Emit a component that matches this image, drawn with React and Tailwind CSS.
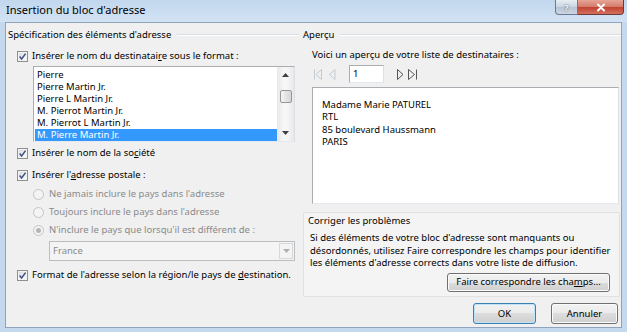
import React from 'react';

const u = (s) => <span className="underline underline-offset-1">{s}</span>;

const Check = () => (
  <span className="flex h-[11px] w-[11px] shrink-0 items-center justify-center border border-[#8e8f8f] bg-[linear-gradient(135deg,#d8d8d8,#ffffff)] shadow-[inset_0_0_0_1px_#f4f4f4]">
    <svg width="9" height="9" viewBox="0 0 9 9">
      <path d="M1.6 4.6 L3.6 7 L7.6 1.6" fill="none" stroke="#3d5185" strokeWidth="1.5" />
    </svg>
  </span>
);

const Radio = ({ checked }) => (
  <span className="flex h-[11px] w-[11px] shrink-0 items-center justify-center rounded-full border border-[#c4c4c4] bg-[#f4f4f4]">
    {checked && <span className="h-[5px] w-[5px] rounded-full bg-[#b5b5b5]" />}
  </span>
);

const GroupHeader = ({ title, className = '' }) => (
  <div className={`flex h-[12px] items-center gap-[6px] ${className}`}>
    <span className="leading-none">{title}</span>
    <span className="h-[2px] flex-1 border-t border-b border-t-[#d5dfe5] border-b-white" />
  </div>
);

const Btn = ({ children, primary, className = '' }) => (
  <div
    className={`flex items-center justify-center rounded-[3px] border leading-none bg-[linear-gradient(#f2f2f2,#ebebeb_50%,#dddddd_50%,#cfcfcf)] ${
      primary ? 'border-[#3c7fb1] shadow-[inset_0_0_0_1px_#bfe4f9]' : 'border-[#707070] shadow-[inset_0_0_0_1px_#fbfbfb]'
    } ${className}`}
  >
    {children}
  </div>
);

const names = [
  'Pierre',
  'Pierre Martin Jr.',
  'Pierre L Martin Jr.',
  'M. Pierrot Martin Jr.',
  'M. Pierrot L Martin Jr.',
  'M. Pierre Martin Jr.'
];

const address = ['Madame Marie PATUREL', 'RTL', '85 boulevard Haussmann', 'PARIS'];

export default function App() {
  return (
    <div className="flex h-[332px] w-[627px] flex-col overflow-hidden bg-[#c4d8ee] font-['Noto_Sans',sans-serif] text-[9.5px] text-black">
      {/* title bar */}
      <div className="flex h-[22px] shrink-0 items-start justify-between bg-[linear-gradient(#c2d7ee,#d2e2f3)]">
        <span className="pl-[6px] pt-[3px] text-[11px] leading-[14px]">Insertion du bloc d'adresse</span>
        <div className="mr-[3px] flex">
          <div className="flex h-[15px] w-[23px] items-center justify-center rounded-bl-[4px] border border-t-0 border-[#6c7b90] bg-[linear-gradient(#e9eef4,#c9d4e0_50%,#b6c4d3_50%,#cbd6e2)] text-[9px] font-bold leading-none text-[#f4f6f8] [text-shadow:0_0_2px_#3b4656]">
            ?
          </div>
          <div className="flex h-[15px] w-[46px] items-center justify-center rounded-br-[4px] border border-l-0 border-t-0 border-[#6e3a35] bg-[linear-gradient(#e6a597,#d47a6a_50%,#c2402f_50%,#d3705f)]">
            <svg width="10" height="9" viewBox="0 0 10 9">
              <path d="M2 1.5 L8 7.5 M8 1.5 L2 7.5" stroke="#ffffff" strokeWidth="2" strokeLinecap="round" />
            </svg>
          </div>
        </div>
      </div>

      {/* client area */}
      <div className="flex flex-1 px-[5px] pb-[4px]">
        <div className="flex flex-1 border border-[#8ea4bd] bg-[#f0f0f0]">
          {/* left column */}
          <div className="flex w-[292px] shrink-0 flex-col">
            <GroupHeader title="Spécification des éléments d'adresse" className="ml-[2px] mt-[6px] mr-[-1px]" />

            <div className="ml-[11px] mt-[8px] flex h-[14px] items-center gap-[4px]">
              <Check />
              <span className="leading-none">Insérer le nom du destinatai{u('r')}e sous le format :</span>
            </div>

            <div className="ml-[27px] mt-[3px] flex h-[76px] w-[262px] border border-[#abadb3] border-b-[#e3e9ef] border-r-[#dbdfe6] bg-white">
              <div className="flex-1 pl-[1px] pt-[2px]">
                {names.map((n, i) => (
                  <div
                    key={n}
                    className={`flex h-[12px] items-center pl-[2px] leading-none ${
                      i === names.length - 1 ? 'bg-[#3399ff] text-white' : ''
                    }`}
                  >
                    {n}
                  </div>
                ))}
              </div>
              <div className="flex w-[17px] flex-col items-center bg-[linear-gradient(90deg,#e8e8e8,#f6f6f6_40%,#f6f6f6_60%,#e8e8e8)]">
                <div className="flex h-[16px] items-center">
                  <svg width="7" height="4" viewBox="0 0 7 4">
                    <path d="M0 4 L3.5 0 L7 4 Z" fill="#404040" />
                  </svg>
                </div>
                <div className="mt-[7px] h-[13px] w-[12px] rounded-[2px] border border-[#979797] bg-[linear-gradient(90deg,#f4f4f4,#e4e4e4_50%,#d6d6d6)]" />
                <div className="flex-1" />
                <div className="flex h-[16px] items-center">
                  <svg width="7" height="4" viewBox="0 0 7 4">
                    <path d="M0 0 L3.5 4 L7 0 Z" fill="#404040" />
                  </svg>
                </div>
              </div>
            </div>

            <div className="ml-[11px] mt-[4px] flex h-[14px] items-center gap-[4px]">
              <Check />
              <span className="leading-none">Insérer le nom de la so{u('c')}iété</span>
            </div>

            <div className="ml-[11px] mt-[8px] flex h-[14px] items-center gap-[4px]">
              <Check />
              <span className="leading-none">Insérer l'{u('a')}dresse postale :</span>
            </div>

            <div className="ml-[27px] mt-[5px] flex h-[14px] items-center gap-[5px] text-[#8a8a8a]">
              <Radio />
              <span className="leading-none">Ne jamais inclure le pays dans l'adresse</span>
            </div>
            <div className="ml-[27px] mt-[4px] flex h-[14px] items-center gap-[5px] text-[#8a8a8a]">
              <Radio />
              <span className="leading-none">Toujours inclure le pays dans l'adresse</span>
            </div>
            <div className="ml-[27px] mt-[4px] flex h-[14px] items-center gap-[5px] text-[#8a8a8a]">
              <Radio checked />
              <span className="leading-none">N'inclure le pays que lorsqu'il est différent de :</span>
            </div>

            <div className="ml-[43px] mt-[4px] flex h-[20px] w-[246px] items-center border border-[#b9bec3] bg-[#f4f4f4]">
              <span className="flex-1 pl-[3px] leading-none text-[#8a8a8a]">France</span>
              <div className="mr-[1px] flex h-[16px] w-[14px] items-center justify-center border border-[#d8d8d8] bg-[#f4f4f4]">
                <svg width="7" height="4" viewBox="0 0 7 4">
                  <path d="M0 0 L3.5 4 L7 0 Z" fill="#b0b0b0" />
                </svg>
              </div>
            </div>

            <div className="ml-[11px] mt-[7px] flex h-[14px] items-center gap-[4px]">
              <Check />
              <span className="leading-none">Format de l'adresse selon la région/le pays de {u('d')}estination.</span>
            </div>
          </div>

          {/* right column */}
          <div className="flex flex-1 flex-col">
            <GroupHeader title="Aperçu" className="ml-[5px] mt-[6px]" />

            <div className="ml-[14px] mt-[7px] flex h-[14px] items-center leading-none">
              Voici un aperçu de votre liste de destinataires :
            </div>

            <div className="ml-[15px] mt-[3px] flex h-[18px] items-center">
              <svg width="9" height="11" viewBox="0 0 9 11">
                <path d="M1.5 0.5 V10.5" stroke="#c2cad3" strokeWidth="1" />
                <path d="M8.5 0.5 L3 5.5 L8.5 10.5 Z" fill="none" stroke="#c2cad3" strokeWidth="1" />
              </svg>
              <svg className="ml-[6px]" width="8" height="11" viewBox="0 0 8 11">
                <path d="M7 0.5 L1.5 5.5 L7 10.5 Z" fill="none" stroke="#c2cad3" strokeWidth="1" />
              </svg>
              <div className="ml-[13px] flex h-[18px] w-[35px] items-center border border-[#abadb3] border-b-[#e3e9ef] border-r-[#dbdfe6] bg-white pl-[3px] leading-none">
                1
              </div>
              <svg className="ml-[13px]" width="7" height="11" viewBox="0 0 7 11">
                <path d="M0.5 0.5 L6 5.5 L0.5 10.5 Z" fill="none" stroke="#555555" strokeWidth="1" />
              </svg>
              <svg className="ml-[4px]" width="11" height="11" viewBox="0 0 11 11">
                <path d="M0.5 0.5 L6.5 5.5 L0.5 10.5 Z" fill="none" stroke="#555555" strokeWidth="1" />
                <path d="M8.5 0.5 V10.5" stroke="#555555" strokeWidth="1" />
              </svg>
            </div>

            <div className="ml-[14px] mt-[4px] h-[117px] w-[307px] border border-[#abadb3] border-b-[#e3e9ef] border-r-[#dbdfe6] bg-white pl-[9px] pt-[10px]">
              {address.map((l) => (
                <div key={l} className="flex h-[12.5px] items-center leading-none">
                  {l}
                </div>
              ))}
            </div>

            <div className="ml-[5px] mt-[8px] flex h-[85px] w-[317px] flex-col rounded-[2px] border border-[#e1e1e1] bg-[#f4f4f4]">
              <div className="ml-[4px] mt-[2px] flex h-[12px] items-center leading-none">Corriger les problèmes</div>
              <div className="ml-[6px] mt-[5px] leading-[12.5px]">
                Si des éléments de votre bloc d'adresse sont manquants ou
                <br />
                désordonnés, utilisez Faire correspondre les champs pour identifier
                <br />
                les éléments d'adresse corrects dans votre liste de diffusion.
              </div>
              <div className="mr-[9px] mt-[3px] flex justify-end">
                <Btn className="h-[19px] w-[163px]">Faire correspondre les cha{u('m')}ps...</Btn>
              </div>
            </div>

            <div className="mr-[3px] mt-[6px] flex justify-end gap-[15px]">
              <Btn primary className="h-[21px] w-[63px]">
                OK
              </Btn>
              <Btn className="h-[21px] w-[67px]">Annuler</Btn>
            </div>
          </div>
        </div>
      </div>
    </div>
  );
}
